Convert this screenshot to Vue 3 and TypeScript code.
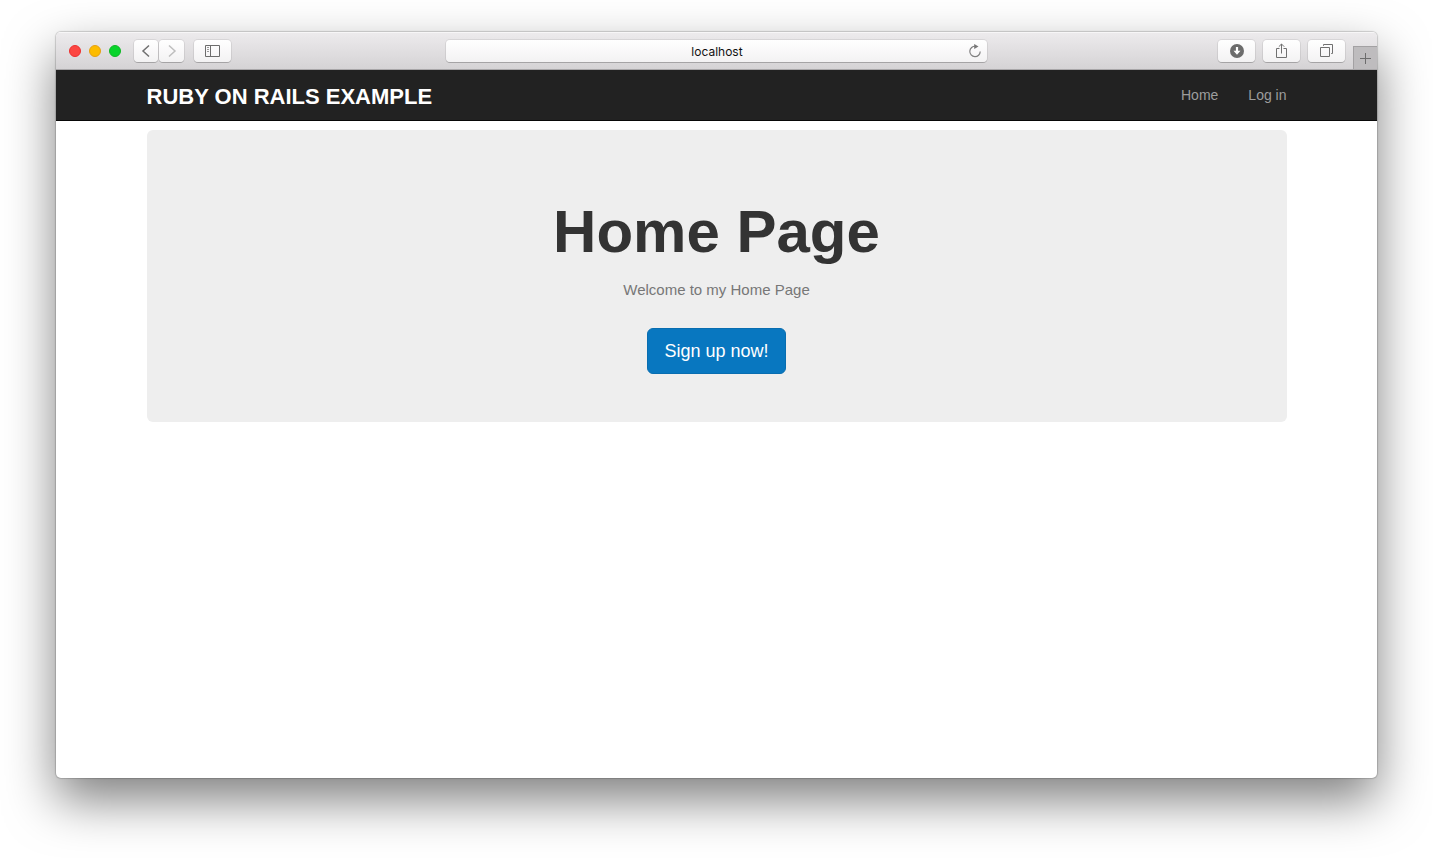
<script setup lang="ts">
import { ref } from 'vue'

interface NavLink {
  label: string
  href: string
}

const address = ref<string>('localhost')
const links: NavLink[] = [
  { label: 'Home', href: '#home' },
  { label: 'Log in', href: '#login' },
]
</script>

<template>
  <div class="desktop">
    <div class="window">
      <div class="toolbar">
        <div class="tools">
          <div class="lights">
            <button class="light close" type="button" aria-label="Close"></button>
            <button class="light minimize" type="button" aria-label="Minimize"></button>
            <button class="light zoom" type="button" aria-label="Zoom"></button>
          </div>
          <div class="history">
            <button class="tool back" type="button" aria-label="Back">
              <svg width="10" height="14" viewBox="0 0 10 14"><path d="M8 1.500 2 7l6 5.500" stroke="#707070" stroke-width="1.500" /></svg>
            </button>
            <button class="tool forward" type="button" aria-label="Forward">
              <svg width="10" height="14" viewBox="0 0 10 14"><path d="M2 1.500 8 7l-6 5.500" stroke="#bebebe" stroke-width="1.500" /></svg>
            </button>
          </div>
          <button class="tool" type="button" aria-label="Show sidebar">
            <svg width="15" height="12" viewBox="0 0 15 12" stroke="#6c6c6c">
              <path d="M.5.5h14v11H.5zM5.500.5v11" />
              <path d="M2 2.500h2M2 4.500h2M2 6.500h2" stroke="#999" />
            </svg>
          </button>
        </div>

        <div class="address">
          <input v-model="address" type="text" aria-label="Address" />
          <button class="reload" type="button" aria-label="Reload">
            <svg width="14" height="14" viewBox="0 0 14 14">
              <path d="M7.500 2.300A5.200 5.200 0 1 0 12.200 7.500" stroke="#808080" stroke-width="1.200" />
              <path d="M6.200 0v5l4.300-2.500z" fill="#777" />
            </svg>
          </button>
        </div>

        <div class="tools right">
          <button class="tool" type="button" aria-label="Downloads">
            <svg width="14" height="14" viewBox="0 0 14 14">
              <circle cx="7" cy="7" r="7" fill="#6c6c6c" />
              <path d="M5.900 3h2.200v3.700h2.400L7 10.800 3.500 6.700h2.400z" fill="#fff" />
            </svg>
          </button>
          <button class="tool" type="button" aria-label="Share">
            <svg width="11" height="16" viewBox="0 0 11 16" stroke="#707070">
              <path d="M3.500 5.500h-3v9h10v-9h-3M5.500 10.500V1M2.800 3.700 5.500 1l2.700 2.700" />
            </svg>
          </button>
          <button class="tool" type="button" aria-label="Show all tabs">
            <svg width="13" height="13" viewBox="0 0 13 13" stroke="#707070">
              <path d="M.5 3.500h9v9h-9zM3.500 1.800V.5h9v9h-1.300" />
            </svg>
          </button>
          <button class="new-tab" type="button" aria-label="New tab">
            <svg width="11" height="11" viewBox="0 0 11 11" stroke="#6c6c6c"><path d="M5.500 0v11M0 5.500h11" /></svg>
          </button>
        </div>
      </div>

      <header class="navbar">
        <div class="container nav-row">
          <a class="brand" href="#home">RUBY ON RAILS EXAMPLE</a>
          <nav>
            <a v-for="link in links" :key="link.label" :href="link.href">{{ link.label }}</a>
          </nav>
        </div>
      </header>

      <main class="container">
        <section class="hero">
          <h1>Home Page</h1>
          <p>Welcome to my Home Page</p>
          <a class="signup" href="#signup">Sign up now!</a>
        </section>
      </main>
    </div>
  </div>
</template>

<style>
body {
  margin: 0;
  background: #fff;
}
</style>

<style scoped>
* {
  box-sizing: border-box;
}

.desktop {
  display: flex;
  min-height: 100vh;
  padding: 32px 56px 80px;
  overflow: hidden;
  font-family: "Liberation Sans", Arial, sans-serif;
}

.window {
  flex: 1;
  min-width: 0;
  overflow: hidden;
  border-radius: 5px;
  background: #fff;
  box-shadow: 0 0 1px 1px rgba(0, 0, 0, 0.17), 0 22px 50px rgba(0, 0, 0, 0.5);
}

button {
  padding: 0;
  border: 0;
  background: none;
}

svg {
  display: block;
  fill: none;
}

.toolbar {
  display: grid;
  grid-template-columns: 1fr minmax(0, 541px) 1fr;
  align-items: center;
  height: 38px;
  border-bottom: 1px solid #a8a6a8;
  background: linear-gradient(#edebed, #d5d3d5);
  box-shadow: inset 0 1px #f7f6f7;
}

.tools {
  display: flex;
  align-items: center;
  align-self: stretch;
}

.tools.right {
  justify-content: flex-end;
  gap: 8px;
}

.lights {
  display: flex;
  gap: 8px;
  margin: 0 13px;
}

.light {
  width: 12px;
  height: 12px;
  border: 1px solid;
  border-radius: 50%;
}

.close {
  border-color: #ed2f2f;
  background: #fc4642;
}

.minimize {
  border-color: #e6a011;
  background: #fdbc00;
}

.zoom {
  border-color: #0fb725;
  background: #08d42b;
}

.history {
  display: flex;
  gap: 1px;
  margin-right: 10px;
}

.tool {
  display: flex;
  align-items: center;
  justify-content: center;
  width: 37px;
  height: 22px;
  border-radius: 4px;
  background: linear-gradient(#fff, #f3f2f3);
  box-shadow: 0 0 0 1px rgba(0, 0, 0, 0.07), 0 1px rgba(0, 0, 0, 0.18);
}

.back {
  width: 24px;
}

.forward {
  width: 25px;
}

.new-tab {
  display: flex;
  align-items: center;
  justify-content: center;
  align-self: flex-end;
  width: 24px;
  height: 23px;
  border-top: 1px solid #a3a1a3;
  border-left: 1px solid #a3a1a3;
  background: #bebcbe;
}

.address {
  display: flex;
  align-items: center;
  height: 22px;
  padding-right: 5px;
  border-radius: 4px;
  background: linear-gradient(#fff, #f3f2f3);
  box-shadow: 0 0 0 1px rgba(0, 0, 0, 0.07), 0 1px rgba(0, 0, 0, 0.18);
}

.address input {
  flex: 1;
  min-width: 0;
  height: 22px;
  padding: 2px 0 0 20px;
  border: 0;
  outline: 0;
  background: none;
  color: #111;
  font: 12px/20px Inter, "Liberation Sans", sans-serif;
  text-align: center;
}

.navbar {
  border-bottom: 1px solid #080808;
  background: #222;
}

.container {
  width: 100%;
  max-width: 1140px;
  margin: 0 auto;
}

.nav-row {
  display: flex;
  align-items: center;
  justify-content: space-between;
  min-height: 50px;
}

a {
  text-decoration: none;
}

.brand {
  padding-top: 4px;
  color: #fff;
  font-size: 22px;
  font-weight: 700;
  line-height: 24px;
}

nav {
  display: flex;
  gap: 30px;
}

nav a {
  color: #9d9d9d;
  font-size: 14px;
  line-height: 20px;
}

.hero {
  display: flex;
  flex-direction: column;
  align-items: center;
  margin-top: 9px;
  padding: 72px 16px 48px;
  border-radius: 6px;
  background: #eee;
  text-align: center;
}

h1 {
  margin: 0 0 17px;
  color: #333;
  font-size: 60px;
  font-weight: 700;
  line-height: 60px;
}

p {
  margin: 0 0 27px;
  color: #777;
  font-size: 15px;
  line-height: 22px;
}

.signup {
  padding: 10px 16px;
  border: 1px solid #086db0;
  border-radius: 6px;
  background: #0877c0;
  color: #fff;
  font-size: 18px;
  line-height: 24px;
}
</style>
